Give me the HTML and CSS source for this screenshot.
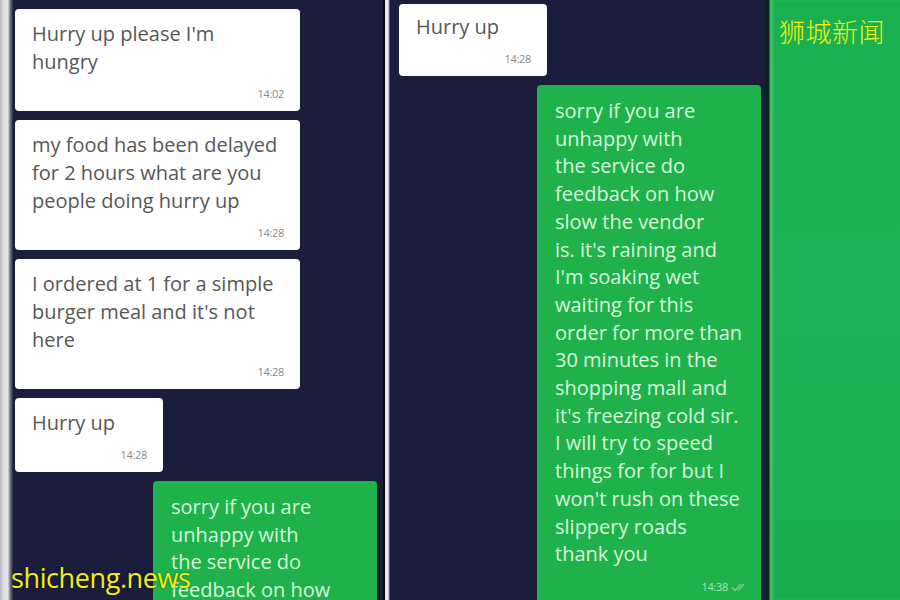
FILE: index.html
```html
<!DOCTYPE html>
<html lang="en">
<head>
    <meta charset="UTF-8">
    <meta name="viewport" content="width=device-width, initial-scale=1.0">
    <title>shicheng.news</title>
    <link rel="stylesheet" href="styles.css">
</head>
<body>
    <div class="shot">
        <div class="edge"></div>

        <div class="chat chat-left">
            <div class="bubble in wide">
                <div class="msg">Hurry up please I'm<br>hungry</div>
                <div class="time">14:02</div>
            </div>
            <div class="bubble in wide">
                <div class="msg">my food has been delayed<br>for 2 hours what are you<br>people doing hurry up</div>
                <div class="time">14:28</div>
            </div>
            <div class="bubble in wide">
                <div class="msg">I ordered at 1 for a simple<br>burger meal and it's not<br>here</div>
                <div class="time">14:28</div>
            </div>
            <div class="bubble in short">
                <div class="msg">Hurry up</div>
                <div class="time">14:28</div>
            </div>
            <div class="bubble out">
                <div class="msg">sorry if you are<br>unhappy with<br>the service do<br>feedback on how<br>slow the vendor</div>
            </div>
        </div>

        <div class="split"></div>

        <div class="chat chat-right">
            <div class="bubble in short first">
                <div class="msg">Hurry up</div>
                <div class="time">14:28</div>
            </div>
            <div class="bubble out">
                <div class="msg">sorry if you are<br>unhappy with<br>the service do<br>feedback on how<br>slow the vendor<br>is. it's raining and<br>I'm soaking wet<br>waiting for this<br>order for more than<br>30 minutes in the<br>shopping mall and<br>it's freezing cold sir.<br>I will try to speed<br>things for for but I<br>won't rush on these<br>slippery roads<br>thank you</div>
                <div class="time">14:38
                    <svg class="ticks" width="18" height="10" viewBox="0 0 18 10">
                        <path d="M1 5.5l3 3L10 2M7 8.5L13 2" fill="none" stroke="currentColor" stroke-width="1.4"/>
                    </svg>
                </div>
            </div>
        </div>

        <div class="rim"></div>
        <div class="strip"></div>

        <div class="mark-cn">狮城新闻</div>
        <div class="mark-en">shicheng.news</div>
    </div>
</body>
</html>
```

FILE: styles.css
```css
body {
    margin: 0;
    overflow: hidden;
    font-family: 'Open Sans', 'Noto Sans', sans-serif;
}

.shot {
    position: relative;
    display: flex;
    width: 900px;
    height: 600px;
    overflow: hidden;
    background-color: #1a1d3a;
}

.edge {
    width: 14px;
    flex-shrink: 0;
    background: linear-gradient(to right, #b9b9c0 0, #dcdce2 25%, #e6e6ea 55%, #6a6a78 75%, #0e1020 100%);
}

.chat {
    display: flex;
    flex-direction: column;
    gap: 9px;
    background-color: #1a1d3b;
}

.chat-left {
    width: 369px;
    padding: 9px 6px 0 1px;
    box-sizing: border-box;
    flex-shrink: 0;
}

.chat-right {
    width: 375px;
    padding: 4px 4px 0 9px;
    box-sizing: border-box;
    flex-shrink: 0;
}

.split {
    width: 7px;
    flex-shrink: 0;
    background: linear-gradient(to right, #0a0b16 0, #0a0b16 28%, #e4e4ea 30%, #f2f2f5 70%, #9a9aa8 85%, #15182e 100%);
}

.rim {
    width: 5px;
    flex-shrink: 0;
    background: linear-gradient(to right, #0d1f22, #06231a 70%, #2b9a55);
}

.strip {
    flex: 1;
    background: linear-gradient(to bottom, #19b051 0, #1eb358 50%, #19ad50 100%);
    box-shadow: inset 3px 0 2px rgba(120, 220, 150, 0.35);
}

/* chat bubbles */
.bubble {
    border-radius: 4px;
    padding: 11px 16px 10px 17px;
    box-sizing: border-box;
}

.bubble.in {
    background-color: #ffffff;
    color: #575757;
    font-size: 20px;
    line-height: 28px;
}

.bubble.first {
    padding-top: 9px;
    padding-bottom: 10px;
}

.bubble.wide {
    width: 285px;
}

.bubble.short {
    width: 148px;
}

.bubble.out {
    align-self: flex-end;
    width: 224px;
    padding: 12px 12px 10px 18px;
    background-color: #1fb24b;
    color: #d9f6df;
    font-size: 20px;
    line-height: 27.7px;
}

.chat-right .bubble.out {
    flex: 1;
    border-radius: 4px 4px 0 0;
    display: flex;
    flex-direction: column;
}

.time {
    margin-top: 11px;
    font-size: 11px;
    line-height: 14px;
    text-align: right;
    color: #8a8a8a;
    letter-spacing: -0.3px;
}

.out .time {
    margin-top: 12px;
    color: #a9e4b7;
    display: flex;
    justify-content: flex-end;
    align-items: center;
    gap: 3px;
}

.ticks {
    color: #7dcf93;
}

/* watermarks */
.mark-cn {
    position: absolute;
    left: 779px;
    top: 13px;
    font-family: 'Noto Sans CJK SC', sans-serif;
    font-size: 26px;
    font-weight: 300;
    line-height: 36px;
    color: #f6f20e;
    letter-spacing: 0.5px;
}

.mark-en {
    position: absolute;
    left: 11px;
    top: 560px;
    font-family: 'Open Sans', sans-serif;
    font-size: 27px;
    line-height: 36px;
    color: #f3ef16;
    text-shadow: 0 0 2px rgba(0, 0, 0, 0.6);
    letter-spacing: -0.4px;
}
```
